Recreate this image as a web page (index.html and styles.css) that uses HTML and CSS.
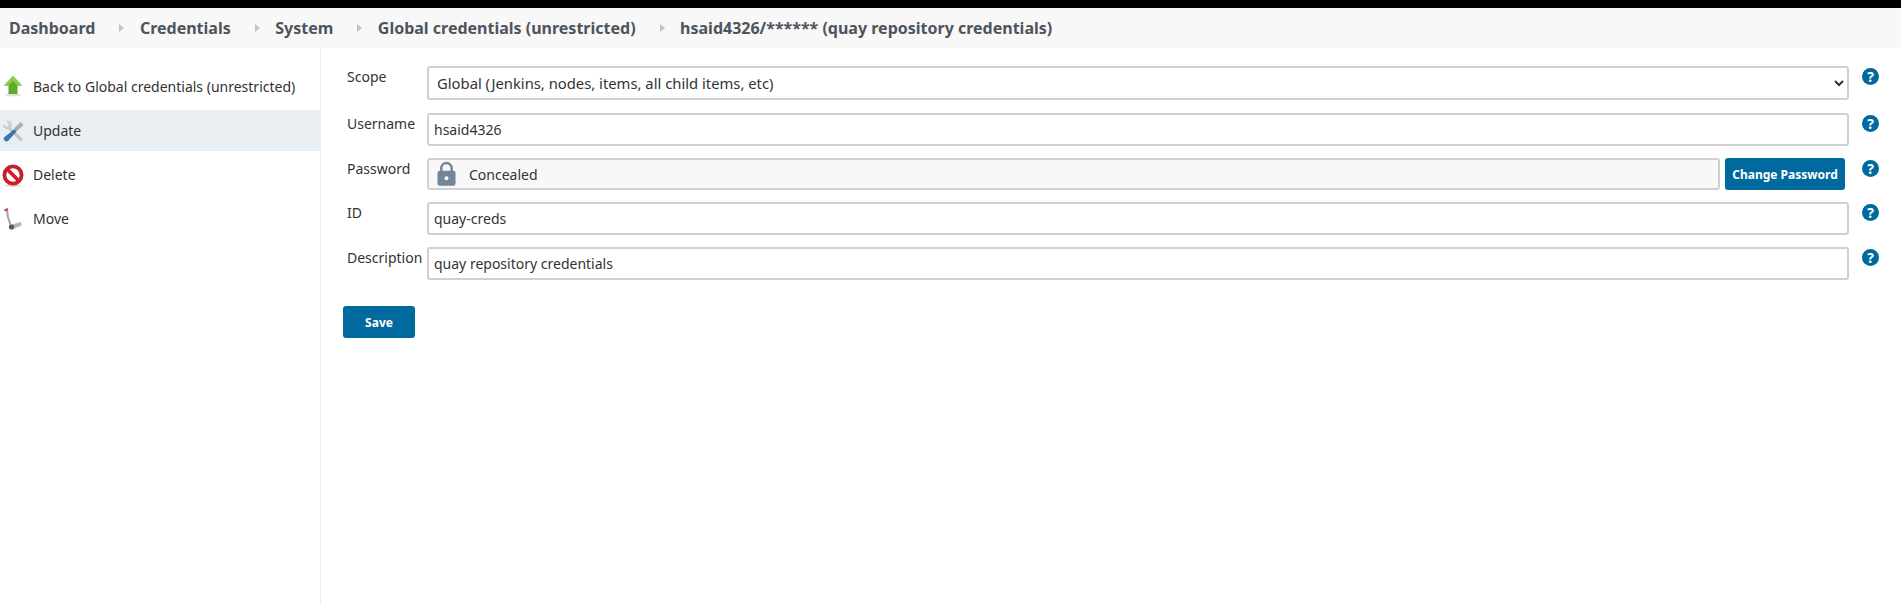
FILE: index.html
```html
<!DOCTYPE html>
<html lang="en">

<head>
  <meta charset="UTF-8">
  <title>Update credentials</title>
  <link rel="stylesheet" href="styles.css">
</head>

<body>

  <div class="topbar"></div>

  <nav class="breadcrumbs">
    <a class="crumb">Dashboard</a>
    <span class="crumb-arrow"></span>
    <a class="crumb">Credentials</a>
    <span class="crumb-arrow"></span>
    <a class="crumb">System</a>
    <span class="crumb-arrow"></span>
    <a class="crumb">Global credentials (unrestricted)</a>
    <span class="crumb-arrow"></span>
    <a class="crumb">hsaid4326/****** (quay repository credentials)</a>
  </nav>

  <div class="page">
    <aside class="sidebar">
      <a class="task">
        <svg class="task-icon" viewBox="0 0 24 24">
          <ellipse cx="12" cy="20" rx="8" ry="1.500" fill="#dfe2dc" />
          <path d="M12 1 L21 10.500 H16.500 V19 H7.500 V10.500 H3 Z" fill="#62a82a" />
          <path d="M12 1 L21 10.500 H16.500 L12 6 L7.500 10.500 H3 Z" fill="#8ccb48" />
        </svg>
        <span>Back to Global credentials (unrestricted)</span>
      </a>
      <a class="task task-active">
        <svg class="task-icon" viewBox="0 0 24 24">
          <path d="M8 7 L22 20 L19.500 22.500 L6 9 Z" fill="#c0c6cb" />
          <path d="M2 5 L5.500 8 L8.500 5.500 L5 2 C9 1 12 4 10.500 8.500 L8.500 10 C4.500 11 1.500 8.500 2 5 Z" fill="#c9ced3" />
          <path d="M19.500 3 L22.500 6 L15.500 12.500 L13 9.500 Z" fill="#a3aeb7" />
          <path d="M13.500 10 L15.500 12.500 L7 22 C5 23.500 1.500 21 3 18.500 Z" fill="#3a76b0" />
        </svg>
        <span>Update</span>
      </a>
      <a class="task">
        <svg class="task-icon" viewBox="0 0 24 24">
          <ellipse cx="12" cy="22.500" rx="8" ry="1.500" fill="#ddd6d6" />
          <circle cx="12" cy="12" r="8.600" fill="#fff" stroke="#cc1f2d" stroke-width="3.800" />
          <path d="M6 6 L18 18" stroke="#cc1f2d" stroke-width="3.800" />
        </svg>
        <span>Delete</span>
      </a>
      <a class="task">
        <svg class="task-icon" viewBox="0 0 24 24">
          <path d="M6 3 L7 10 L9.500 18" fill="none" stroke="#a5a59f" stroke-width="2" />
          <path d="M3.500 3.500 L7 2" stroke="#c8424a" stroke-width="2" />
          <path d="M9 18 L20 15 L20.500 18.500 L11 22.500 Z" fill="#b2b5ad" />
          <circle cx="10.500" cy="20" r="2.600" fill="#5a5c54" />
        </svg>
        <span>Move</span>
      </a>
    </aside>

    <main class="main">
      <form class="cred-form">
        <div class="field field-scope">
          <label class="field-label">Scope</label>
          <select class="control select-control">
            <option>Global (Jenkins, nodes, items, all child items, etc)</option>
          </select>
          <span class="help">?</span>
        </div>

        <div class="field field-user">
          <label class="field-label">Username</label>
          <input class="control" value="hsaid4326">
          <span class="help">?</span>
        </div>

        <div class="field field-pass">
          <label class="field-label">Password</label>
          <div class="pass-row">
            <div class="concealed">
              <svg class="lock" viewBox="0 0 20 26">
                <path d="M4.500 12 V7.500 A5.500 5.500 0 0 1 15.500 7.500 V12" fill="none" stroke="#738598" stroke-width="2.600" />
                <rect x="0.500" y="10" width="19" height="16" rx="2.500" fill="#738598" />
                <circle cx="10" cy="18" r="2" fill="#fff" />
              </svg>
              <span>Concealed</span>
            </div>
            <button class="btn btn-change" type="button">Change Password</button>
          </div>
          <span class="help">?</span>
        </div>

        <div class="field field-id">
          <label class="field-label">ID</label>
          <input class="control" value="quay-creds">
          <span class="help">?</span>
        </div>

        <div class="field field-desc">
          <label class="field-label">Description</label>
          <input class="control" value="quay repository credentials">
          <span class="help">?</span>
        </div>

        <button class="btn btn-save" type="submit">Save</button>
      </form>
    </main>
  </div>

</body>

</html>
```

FILE: styles.css
```css
* {
  box-sizing: border-box;
}

html,
body {
  height: 100%;
}

body {
  margin: 0;
  display: flex;
  flex-direction: column;
  font-family: "Noto Sans", sans-serif;
  font-size: 14px;
  color: #333;
  background: #fff;
  overflow: hidden;
}

.topbar {
  height: 8px;
  background: #000;
}

.breadcrumbs {
  display: flex;
  align-items: center;
  height: 40px;
  padding-left: 9px;
  padding-bottom: 1px;
  background: #f8f8f8;
  color: #4d545d;
  font-size: 16px;
  font-weight: 700;
}

.crumb-arrow {
  width: 0;
  height: 0;
  margin: 1px 15.500px 0 24px;
  border-left: 5px solid #bfc1c3;
  border-top: 4px solid transparent;
  border-bottom: 4px solid transparent;
}

.page {
  flex: 1;
  display: flex;
}

.sidebar {
  width: 321px;
  padding-top: 18px;
  border-right: 1px solid #e9eef3;
}

.task {
  display: flex;
  align-items: center;
  gap: 8px;
  height: 41px;
  margin-bottom: 3px;
  padding-left: 1px;
}

.task-active {
  background: #e9eef3;
}

.task-icon {
  width: 24px;
  height: 24px;
  flex: none;
}

.main {
  flex: 1;
  padding: 18px 0 0 22px;
}

.field {
  display: grid;
  grid-template-columns: 80px 1422px 17px;
  column-gap: 0;
  margin-bottom: 12px;
  padding-left: 4px;
}

.field-scope {
  margin-bottom: 13px;
}

.field-desc {
  margin-bottom: 26px;
}

.field-label {
  padding-top: 1px;
  line-height: 20px;
}

.field .help {
  margin-left: 13px;
  margin-top: 2px;
}

.control {
  width: 100%;
  height: 33px;
  padding: 0 5px;
  border: 2px solid #d0d0d0;
  border-radius: 3px;
  background: #fff;
  color: #333;
  font: inherit;
}

.select-control {
  height: 34px;
  padding-left: 4px;
  font-size: 14.8px;
}

.pass-row {
  display: flex;
  gap: 5px;
  padding-right: 4px;
  height: 32px;
}

.concealed {
  flex: 1;
  display: flex;
  align-items: center;
  gap: 13px;
  padding-left: 8px;
  border: 2px solid #d0d0d0;
  border-radius: 3px;
  background: #f8f8f8;
}

.lock {
  width: 19px;
  height: 25px;
  margin-top: -1px;
}

.help {
  width: 17px;
  height: 17px;
  border-radius: 50%;
  background: #006a9e;
  color: #fff;
  font-size: 14px;
  font-weight: 700;
  line-height: 17px;
  text-align: center;
}

.btn {
  border: none;
  border-radius: 3px;
  background: #006a9e;
  color: #fff;
  font-family: inherit;
  font-size: 12px;
  font-weight: 700;
}

.btn-change {
  width: 120px;
}

.btn-save {
  display: block;
  width: 72px;
  height: 32px;
}
```
